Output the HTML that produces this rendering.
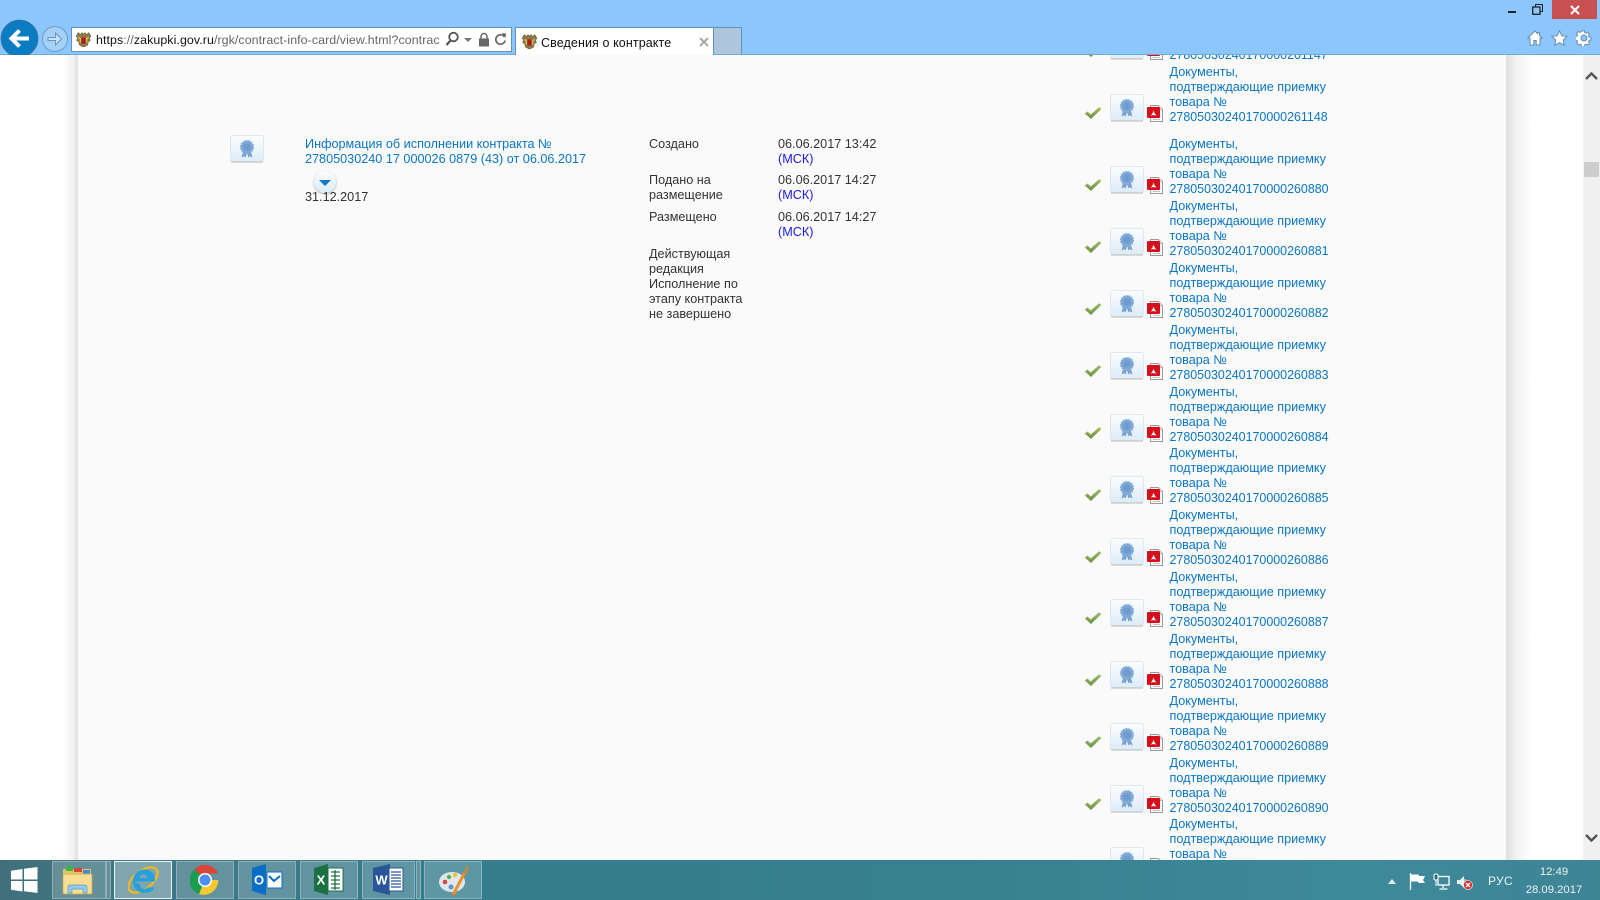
<!DOCTYPE html>
<html lang="ru"><head><meta charset="utf-8"><title>Сведения о контракте</title>
<style>
html,body{margin:0;padding:0;width:1600px;height:900px;overflow:hidden;background:#fff;font-family:"Liberation Sans","DejaVu Sans",sans-serif}
*{box-sizing:border-box}
.abs,.t,.r,svg.i{position:absolute}
.abs{position:absolute}
#panel{position:absolute;left:78px;top:0;width:1428px;height:900px;background:#fafafa}
#sl{position:absolute;left:53px;top:0;width:25px;height:900px;background:linear-gradient(90deg,#fff,#fff 40%,#f2f2f2 80%,#dedede)}
#sr{position:absolute;left:1506px;top:0;width:26px;height:900px;background:linear-gradient(90deg,#dedede,#f2f2f2 40%,#fff)}
.t{position:absolute;font-size:12.65px;line-height:15px;color:#333;white-space:nowrap}
.l{color:#0b76c4}
.m{color:#1a1ae6}
.r{position:absolute;left:1169.500px;font-size:12.65px;line-height:15.1px;color:#0b76c4;white-space:nowrap;width:170px}
.r span{font-size:12.45px}
#top{position:absolute;left:0;top:0;width:1600px;height:55px;background:#8bc6fc;border-bottom:1px solid #6ea9de}
#tb{position:absolute;left:0;top:860px;width:1600px;height:40px;background:linear-gradient(90deg,#41707c 0,#3e7684 8%,#367d8e 30%,#37808f 60%,#3d8a9b 85%,#3e8495 100%)}
.btn{position:absolute;top:1px;height:38px;background:rgba(255,255,255,.2);border:1px solid rgba(255,255,255,.28)}
</style></head><body>
<svg width="0" height="0" style="position:absolute">
<defs>
<linearGradient id="bg" x1="0" y1="0" x2="0" y2="1"><stop offset="0" stop-color="#fbfdfe"/><stop offset="1" stop-color="#dcecf8"/></linearGradient>
<linearGradient id="cg" x1="0" y1="0" x2="0" y2="1"><stop offset="0" stop-color="#9cbf6a"/><stop offset="1" stop-color="#6b9142"/></linearGradient>
<symbol id="badge" viewBox="0 0 34 28">
<rect x=".5" y=".5" width="33" height="26" rx="2" fill="url(#bg)" stroke="#e3e7ea"/>
<path d="M1 27h32" stroke="#c3c6c8" stroke-width="1.200"/>
<path d="M13 17l-1.500 5.500 2.800-1.300 1.400 1.300 1.300-5zM21 17l1.500 5.500-2.800-1.300-1.400 1.300-1.300-5z" fill="#7ba2cf"/>
<circle cx="17" cy="12" r="6.300" fill="#7ea8d6" stroke="#86acd8" stroke-width="1.500" stroke-dasharray="1.800 1"/>
<circle cx="17" cy="12" r="3.800" fill="#6f9bcd"/>
</symbol>
<symbol id="chk" viewBox="0 0 18 14">
<path d="M.8 7.500L3.500 5.500l3.200 3L15 1.200l2.400 1.800L7 13z" fill="url(#cg)"/>
</symbol>
<symbol id="pdf" viewBox="0 0 17 17">
<path d="M3.500.5h8l4 4v12h-12z" fill="#fbfbfb" stroke="#9a9a9a"/>
<path d="M11.500.5v4h4" fill="#e8e8e8" stroke="#a5a5a5" stroke-width=".8"/>
<path d="M6 14.500h7" stroke="#c4c4c4"/>
<rect x="0" y="2" width="13" height="11" rx="1" fill="#d5101c"/>
<path d="M3.500 10.500c1.500-.8 2.500-3 3-5 .5 2 1.500 3.800 3 5-2-.5-4-.5-6 0z" fill="#fff"/>
</symbol>
<symbol id="arms" viewBox="0 0 16 16">
<path d="M3 1.500l2.500 2 1-2 1.500 1.500L9.500 1.500l1 2 2.500-2 2 3.500-1.500 1.500 1 2.500-2 1-.5 3-2.500 1.500L8 15l-1.500-.5L4 13l-.5-3-2-1 1-2.500L1 5z" fill="#8d7a45" stroke="#5f5a35" stroke-width=".5"/>
<path d="M3 6l2 1v4M13 6l-2 1v4" stroke="#ddc35a" stroke-width="1.200" fill="none"/>
<rect x="6" y="6" width="4" height="6" rx="1" fill="#a8201e"/>
</symbol>
</defs>
</svg>

<div id="sl"></div><div id="panel"></div><div id="sr"></div>

<!-- left row -->
<svg class="i" style="left:230px;top:135px" width="34" height="28"><use href="#badge"/></svg>
<div class="t l" style="left:305px;top:136.500px">Информация об исполнении контракта №<br>27805030240 17 000026 0879 (43) от 06.06.2017</div>
<div class="abs" style="left:314px;top:171px;width:22px;height:22px;border-radius:50%;background:linear-gradient(#fdfeff,#d8eaf7);box-shadow:0 1px 2px #aaa"></div>
<div class="abs" style="left:319px;top:180px;border-left:6px solid transparent;border-right:6px solid transparent;border-top:6px solid #0e78c8"></div>
<div class="t" style="left:305px;top:190px">31.12.2017</div>

<!-- middle -->
<div class="t" style="left:649px;top:136.500px">Создано</div>
<div class="t" style="left:778px;top:136.500px">06.06.2017 13:42<br><span class="m">(МСК)</span></div>
<div class="t" style="left:649px;top:172.500px">Подано на<br>размещение</div>
<div class="t" style="left:778px;top:172.500px">06.06.2017 14:27<br><span class="m">(МСК)</span></div>
<div class="t" style="left:649px;top:209.500px">Размещено</div>
<div class="t" style="left:778px;top:209.500px">06.06.2017 14:27<br><span class="m">(МСК)</span></div>
<div class="t" style="left:649px;top:247px">Действующая<br>редакция<br>Исполнение по<br>этапу контракта<br>не завершено</div>

<!-- right rows -->
<div class="r" style="top:2.500px">Документы,<br>подтверждающие приемку<br>товара №<br><span>27805030240170000261147</span></div>
<svg class="i" style="left:1084px;top:44px" width="18" height="14"><use href="#chk"/></svg>
<svg class="i" style="left:1110px;top:32px" width="34" height="28"><use href="#badge"/></svg>
<svg class="i" style="left:1147px;top:43px" width="17" height="17"><use href="#pdf"/></svg>

<div class="r" style="top:64.500px">Документы,<br>подтверждающие приемку<br>товара №<br><span>27805030240170000261148</span></div>
<svg class="i" style="left:1084px;top:106px" width="18" height="14"><use href="#chk"/></svg>
<svg class="i" style="left:1110px;top:94px" width="34" height="28"><use href="#badge"/></svg>
<svg class="i" style="left:1147px;top:105px" width="17" height="17"><use href="#pdf"/></svg>

<div class="r" style="top:137px">Документы,<br>подтверждающие приемку<br>товара №<br><span>27805030240170000260880</span></div>
<svg class="i" style="left:1084px;top:178px" width="18" height="14"><use href="#chk"/></svg>
<svg class="i" style="left:1110px;top:166px" width="34" height="28"><use href="#badge"/></svg>
<svg class="i" style="left:1147px;top:177px" width="17" height="17"><use href="#pdf"/></svg>

<div class="r" style="top:198.500px">Документы,<br>подтверждающие приемку<br>товара №<br><span>27805030240170000260881</span></div>
<svg class="i" style="left:1084px;top:240px" width="18" height="14"><use href="#chk"/></svg>
<svg class="i" style="left:1110px;top:228px" width="34" height="28"><use href="#badge"/></svg>
<svg class="i" style="left:1147px;top:239px" width="17" height="17"><use href="#pdf"/></svg>

<div class="r" style="top:260.500px">Документы,<br>подтверждающие приемку<br>товара №<br><span>27805030240170000260882</span></div>
<svg class="i" style="left:1084px;top:302px" width="18" height="14"><use href="#chk"/></svg>
<svg class="i" style="left:1110px;top:290px" width="34" height="28"><use href="#badge"/></svg>
<svg class="i" style="left:1147px;top:301px" width="17" height="17"><use href="#pdf"/></svg>

<div class="r" style="top:322.500px">Документы,<br>подтверждающие приемку<br>товара №<br><span>27805030240170000260883</span></div>
<svg class="i" style="left:1084px;top:364px" width="18" height="14"><use href="#chk"/></svg>
<svg class="i" style="left:1110px;top:352px" width="34" height="28"><use href="#badge"/></svg>
<svg class="i" style="left:1147px;top:363px" width="17" height="17"><use href="#pdf"/></svg>

<div class="r" style="top:384.500px">Документы,<br>подтверждающие приемку<br>товара №<br><span>27805030240170000260884</span></div>
<svg class="i" style="left:1084px;top:426px" width="18" height="14"><use href="#chk"/></svg>
<svg class="i" style="left:1110px;top:414px" width="34" height="28"><use href="#badge"/></svg>
<svg class="i" style="left:1147px;top:425px" width="17" height="17"><use href="#pdf"/></svg>

<div class="r" style="top:446px">Документы,<br>подтверждающие приемку<br>товара №<br><span>27805030240170000260885</span></div>
<svg class="i" style="left:1084px;top:488px" width="18" height="14"><use href="#chk"/></svg>
<svg class="i" style="left:1110px;top:476px" width="34" height="28"><use href="#badge"/></svg>
<svg class="i" style="left:1147px;top:487px" width="17" height="17"><use href="#pdf"/></svg>

<div class="r" style="top:507.500px">Документы,<br>подтверждающие приемку<br>товара №<br><span>27805030240170000260886</span></div>
<svg class="i" style="left:1084px;top:550px" width="18" height="14"><use href="#chk"/></svg>
<svg class="i" style="left:1110px;top:538px" width="34" height="28"><use href="#badge"/></svg>
<svg class="i" style="left:1147px;top:549px" width="17" height="17"><use href="#pdf"/></svg>

<div class="r" style="top:570px">Документы,<br>подтверждающие приемку<br>товара №<br><span>27805030240170000260887</span></div>
<svg class="i" style="left:1084px;top:611px" width="18" height="14"><use href="#chk"/></svg>
<svg class="i" style="left:1110px;top:599px" width="34" height="28"><use href="#badge"/></svg>
<svg class="i" style="left:1147px;top:610px" width="17" height="17"><use href="#pdf"/></svg>

<div class="r" style="top:631.500px">Документы,<br>подтверждающие приемку<br>товара №<br><span>27805030240170000260888</span></div>
<svg class="i" style="left:1084px;top:673px" width="18" height="14"><use href="#chk"/></svg>
<svg class="i" style="left:1110px;top:661px" width="34" height="28"><use href="#badge"/></svg>
<svg class="i" style="left:1147px;top:672px" width="17" height="17"><use href="#pdf"/></svg>

<div class="r" style="top:693.500px">Документы,<br>подтверждающие приемку<br>товара №<br><span>27805030240170000260889</span></div>
<svg class="i" style="left:1084px;top:735px" width="18" height="14"><use href="#chk"/></svg>
<svg class="i" style="left:1110px;top:723px" width="34" height="28"><use href="#badge"/></svg>
<svg class="i" style="left:1147px;top:734px" width="17" height="17"><use href="#pdf"/></svg>

<div class="r" style="top:755.500px">Документы,<br>подтверждающие приемку<br>товара №<br><span>27805030240170000260890</span></div>
<svg class="i" style="left:1084px;top:797px" width="18" height="14"><use href="#chk"/></svg>
<svg class="i" style="left:1110px;top:785px" width="34" height="28"><use href="#badge"/></svg>
<svg class="i" style="left:1147px;top:796px" width="17" height="17"><use href="#pdf"/></svg>

<div class="r" style="top:816.500px">Документы,<br>подтверждающие приемку<br>товара №<br><span>27805030240170000260891</span></div>
<svg class="i" style="left:1084px;top:860px" width="18" height="14"><use href="#chk"/></svg>
<svg class="i" style="left:1110px;top:847px" width="34" height="28"><use href="#badge"/></svg>
<svg class="i" style="left:1147px;top:858px" width="17" height="17"><use href="#pdf"/></svg>

<!-- scrollbar -->
<div class="abs" style="left:1583px;top:55px;width:17px;height:805px;background:#f0f0f0"></div>
<div class="abs" style="left:1584px;top:162px;width:15px;height:15px;background:#cdcdcd"></div>
<svg class="i" style="left:1585px;top:71px" width="13" height="10"><path d="M1 8l5.500-5.500L12 8" fill="none" stroke="#555" stroke-width="2.400"/></svg>
<svg class="i" style="left:1585px;top:833px" width="13" height="10"><path d="M1 2l5.500 5.500L12 2" fill="none" stroke="#555" stroke-width="2.400"/></svg>

<!-- browser chrome -->
<div id="top">
  <svg class="i" style="left:0;top:18px" width="40" height="37"><circle cx="19.500" cy="20.500" r="18.500" fill="#0b7cc4" stroke="#3f6e95" stroke-width=".8"/><path d="M29 20.500H12M19.500 12.500l-8 8 8 8" fill="none" stroke="#fff" stroke-width="4"/></svg>
  <svg class="i" style="left:41px;top:25px" width="29" height="29"><circle cx="14" cy="14" r="12.500" fill="#a3d1f8" stroke="#6d9cc5"/><path d="M7 12.500h7.500v-4.500l6 6-6 6v-4.500H7z" fill="#c8e3f8" stroke="#6b95bb"/></svg>

  <div class="abs" style="left:71px;top:27px;width:441px;height:25px;background:#fff;border:1px solid #5f93bf"></div>
  <svg class="i" style="left:75px;top:31px" width="17" height="17"><use href="#arms"/></svg>
  <div class="abs" style="left:96px;top:32px;width:344px;height:16px;overflow:hidden;font-size:12.400px;line-height:16px;color:#666;white-space:nowrap;letter-spacing:.08px"><span style="color:#111">https</span>://<span style="color:#111">zakupki.gov.ru</span>/rgk/contract-info-card/view.html?contract</div>
  <svg class="i" style="left:445px;top:31px" width="15" height="16"><circle cx="8.500" cy="6" r="4.300" fill="none" stroke="#555" stroke-width="1.800"/><path d="M5.500 9.500L1.500 14" stroke="#555" stroke-width="2.200"/></svg>
  <div class="abs" style="left:464px;top:38px;border-left:4px solid transparent;border-right:4px solid transparent;border-top:4px solid #777"></div>
  <svg class="i" style="left:478px;top:32px" width="12" height="15"><path d="M3 7V4.500a3 3 0 0 1 6 0V7" fill="none" stroke="#666" stroke-width="1.500"/><rect x="1" y="6.500" width="10" height="8" fill="#666"/></svg>
  <svg class="i" style="left:494px;top:32px" width="13" height="14"><path d="M10.500 5a4.700 4.700 0 1 0 .6 3.500" fill="none" stroke="#666" stroke-width="1.700"/><path d="M8 1l4 .5-.5 4.500z" fill="#666"/></svg>

  <div class="abs" style="left:515px;top:27px;width:199px;height:28px;background:#fff;border:1px solid #5f93bf;border-bottom:0"></div>
  <svg class="i" style="left:521px;top:33px" width="17" height="17"><use href="#arms"/></svg>
  <div class="abs" style="left:541px;top:34.500px;font-size:12.500px;line-height:17px;color:#111;white-space:nowrap;letter-spacing:.1px">Сведения о контракте</div>
  <svg class="i" style="left:699px;top:37px" width="10" height="10"><path d="M1 1l8 8M9 1l-8 8" stroke="#aaa" stroke-width="2"/></svg>
  <div class="abs" style="left:714px;top:27px;width:28px;height:27px;background:#aec6dc;border:1px solid #5f93bf;border-left:0;border-bottom:0"></div>

  <div class="abs" style="left:1508px;top:11px;width:8px;height:2px;background:#222"></div>
  <svg class="i" style="left:1532px;top:4px" width="11" height="11"><path d="M3.500 2.500v-2h7v7h-2" fill="none" stroke="#222"/><rect x=".7" y="3" width="7.300" height="7.300" fill="none" stroke="#222" stroke-width="1.300"/></svg>
  <div class="abs" style="left:1552px;top:0;width:45px;height:19px;background:#c75050"></div>
  <svg class="i" style="left:1570px;top:5px" width="10" height="10"><path d="M1 1l8 8M9 1l-8 8" stroke="#fff" stroke-width="2"/></svg>

  <svg class="i" style="left:1527px;top:30px" width="16" height="16"><path d="M8 1L.8 8h2.200v7h3.800v-4.500h2.400V15H13V8h2.200L12.500 5.400V2.500h-2v1z" fill="#fff" stroke="#6d8aa8"/></svg>
  <svg class="i" style="left:1551px;top:30px" width="17" height="16"><path d="M8.500.8l2.300 5 5.400.6-4 3.600 1.100 5.300-4.800-2.700-4.800 2.700L4.800 10l-4-3.600 5.400-.6z" fill="#fff" stroke="#6d8aa8"/></svg>
  <svg class="i" style="left:1576px;top:30px" width="16" height="16"><path d="M6.500 1h3l.4 2 1.500.7 1.800-1 2 2-1 1.800.7 1.500 2 .4v0 3l-2 .4-.7 1.500 1 1.800-2 2-1.800-1-1.500.7-.4 2h-3l-.4-2-1.500-.7-1.800 1-2-2 1-1.800-.7-1.500-2-.4V7.400l2-.4.7-1.500-1-1.800 2-2 1.800 1 1.500-.7z" transform="scale(.88)" fill="#fff" stroke="#6d8aa8" stroke-width="1.100"/><circle cx="8" cy="8" r="3" fill="#8bc6fc" stroke="#6d8aa8"/></svg>
</div>

<!-- taskbar -->
<div id="tb">
  <svg class="i" style="left:11px;top:7px" width="27" height="26"><path d="M0 3.800L11.500 2v10.500H0zM13 1.800L26.500 0v12.500H13zM0 14h11.500v10.500L0 22.800zM13 14h13.500v12L13 24.300z" fill="#fff"/></svg>

  <div class="btn" style="left:52px;width:54px"></div><div class="btn" style="left:106px;width:5px"></div>
  <svg class="i" style="left:61px;top:5px" width="33" height="30"><rect x="2" y="4" width="28" height="24" rx="1" fill="#e8c667"/><rect x="5" y="1" width="7" height="5" fill="#3eb34a"/><rect x="13" y="3" width="8" height="4" fill="#d8453a"/><rect x="22" y="5" width="7" height="4" fill="#3a8fd8"/><rect x="2" y="9" width="29" height="20" rx="1" fill="#f7de93" stroke="#c9a546" stroke-width=".7"/><path d="M7 28v-5c0-3 1-3 3-3h13c2 0 3 0 3 3v5h-4v-4H11v4z" fill="#8fcdf0" stroke="#5d9cc9" stroke-width=".7"/></svg>

  <div class="btn" style="left:114px;width:58px;background:rgba(255,255,255,.35);border:1px solid rgba(255,255,255,.85)"></div>
  <svg class="i" style="left:128px;top:3px" width="32" height="34"><ellipse cx="15" cy="17" rx="17" ry="9" transform="rotate(-38 15 17)" fill="none" stroke="#f2b91f" stroke-width="2.200"/><path d="M5.500 18.500h21.500c.5-8-4.500-12-10.500-12-7 0-11.500 5.500-11.500 12 0 7 5.500 11.500 11.500 11.500 5 0 8.500-2.200 10-5.500h-7c-.8 1-2 1.500-3 1.500-2.800 0-4.500-2-4.500-4.500zm6-3.500c.3-2 2-3.500 4-3.500s3.700 1.500 4 3.500z" fill="#27a0dc" fill-rule="evenodd"/></svg>

  <div class="btn" style="left:176px;width:58px"></div>
  <svg class="i" style="left:190px;top:5px" width="30" height="30"><path d="M15 15L4.500 4.200A14.800 14.800 0 0 1 28.300 8.500H15z" fill="#db4437"/><path d="M15 15L9 29A14.800 14.800 0 0 1 4.500 4.200z" fill="#1b9d4f"/><path d="M15 15H28.300A14.800 14.800 0 0 1 15 29.800 14.800 14.800 0 0 1 9 29z" fill="#f8c830"/><circle cx="15" cy="15" r="7" fill="#fff"/><circle cx="15" cy="15" r="5.500" fill="#4d8df5"/></svg>

  <div class="btn" style="left:238px;width:58px"></div>
  <svg class="i" style="left:252px;top:4px" width="31" height="31"><path d="M0 4L14 0v31L0 27z" fill="#0a6ec4"/><rect x="15" y="8" width="15" height="16" fill="#fff" stroke="#0a6ec4"/><path d="M17 12l5 5 6-5" fill="none" stroke="#0a6ec4" stroke-width="2"/><text x="7" y="20.500" text-anchor="middle" font-family="Liberation Sans" font-weight="700" font-size="13" fill="#fff">O</text></svg>

  <div class="btn" style="left:300px;width:58px"></div>
  <svg class="i" style="left:314px;top:4px" width="31" height="31"><path d="M0 4L14 0v31L0 27z" fill="#1b7143"/><rect x="14" y="4" width="15" height="23" fill="#fff" stroke="#1b7143"/><path d="M17 8h9M17 12h9M17 16h9M17 20h9M17 24h9M21 6v20" stroke="#1b7143" stroke-width="1.300"/><text x="7" y="20.500" text-anchor="middle" font-family="Liberation Sans" font-weight="700" font-size="13" fill="#fff">X</text></svg>

  <div class="btn" style="left:362px;width:53px"></div><div class="btn" style="left:416px;width:5px"></div>
  <svg class="i" style="left:373px;top:4px" width="31" height="31"><path d="M0 4L17 0v31L0 27z" fill="#2a5699"/><rect x="16" y="4" width="14" height="23" fill="#fff" stroke="#2a5699"/><path d="M18 8h10M18 11h10M18 14h10M18 17h10M18 20h10M18 23h10" stroke="#2a5699" stroke-width="1.300"/><text x="8.500" y="20.500" text-anchor="middle" font-family="Liberation Sans" font-weight="700" font-size="13" fill="#fff">W</text></svg>

  <div class="btn" style="left:424px;width:58px"></div>
  <svg class="i" style="left:438px;top:4px" width="32" height="32"><ellipse cx="14" cy="18" rx="13" ry="10" fill="#dfe7ec"/><circle cx="7" cy="18" r="2.300" fill="#d8453a"/><circle cx="11" cy="13" r="2.200" fill="#5ab04a"/><circle cx="17" cy="11" r="2.200" fill="#e9c33a"/><circle cx="13" cy="23" r="2.500" fill="#5f95c8"/><path d="M15 31L27 8" stroke="#e8902a" stroke-width="3"/><path d="M25 9l4-8 2 2-2 7z" fill="#b58a4a"/></svg>

  <!-- tray -->
  <div class="abs" style="left:1388px;top:19px;border-left:4.500px solid transparent;border-right:4.500px solid transparent;border-bottom:5px solid #e4eef2"></div>
  <svg class="i" style="left:1409px;top:13px" width="17" height="17"><path d="M1.500 0v17" stroke="#fff" stroke-width="1.300"/><path d="M2 1.500h7l1.500 1.500H16l-2 4 2 3h-6l-1.500-1.500H2z" fill="#fff"/></svg>
  <svg class="i" style="left:1433px;top:13px" width="17" height="17"><rect x="5" y="3.500" width="11" height="8.500" fill="none" stroke="#fff" stroke-width="1.300"/><path d="M10 12v3M6.500 16h8" stroke="#fff" stroke-width="1.300"/><rect x="1" y="1" width="4" height="6" rx="1.500" fill="#2f6f80" stroke="#fff"/><path d="M3 7v6" stroke="#fff"/></svg>
  <svg class="i" style="left:1457px;top:15px" width="17" height="16"><path d="M0 5h3l4-4v12L3 9H0z" fill="#e8f2f5"/><path d="M8 4v6" stroke="#e8f2f5"/><circle cx="11" cy="10" r="4.500" fill="#dd2a2a" stroke="#fff" stroke-width=".6"/><path d="M9 8l4 4M13 8l-4 4" stroke="#fff" stroke-width="1.300"/></svg>
  <div class="abs" style="left:1488px;top:13px;font-size:12px;line-height:16px;color:#e8f2f5;letter-spacing:.3px">РУС</div>
  <div class="abs" style="left:1513px;top:0;width:82px;text-align:center;font-size:11.300px;line-height:18px;color:#e8f2f5;padding-top:3px">12:49<br>28.09.2017</div>
</div>
</body></html>
